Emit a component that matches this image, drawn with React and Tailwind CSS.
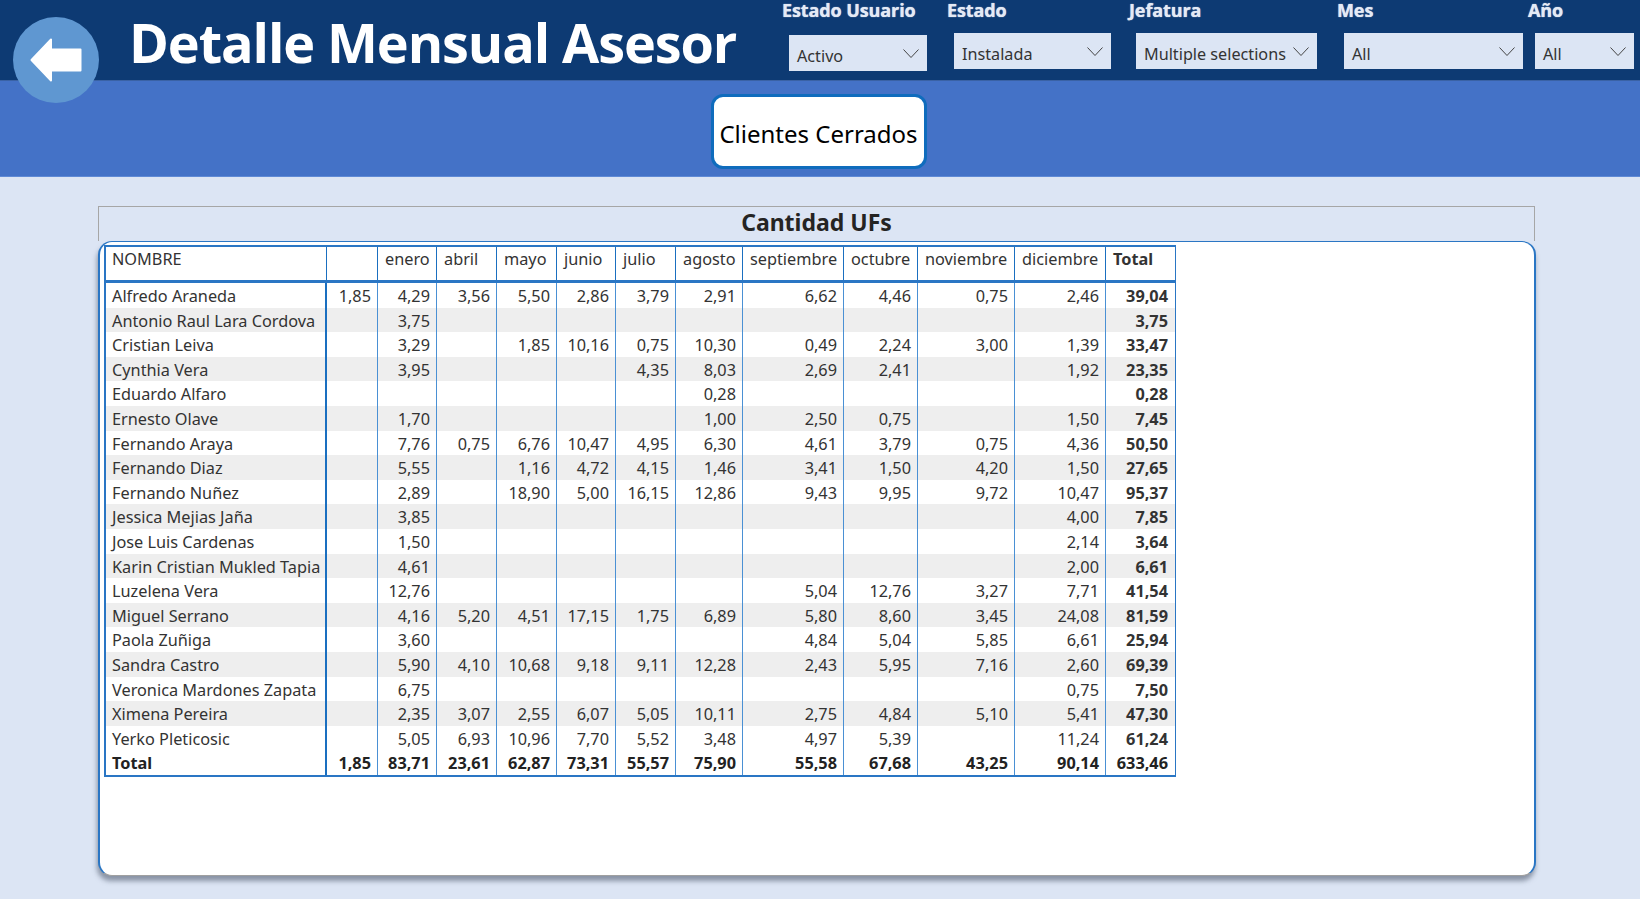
// App.jsx
import React from "react";

const MONTHS = ["", "enero", "abril", "mayo", "junio", "julio", "agosto", "septiembre", "octubre", "noviembre", "diciembre"];

// name, then blank col + 10 months + total
const ROWS = [
  ["Alfredo Araneda", "1,85", "4,29", "3,56", "5,50", "2,86", "3,79", "2,91", "6,62", "4,46", "0,75", "2,46", "39,04"],
  ["Antonio Raul Lara Cordova", "", "3,75", "", "", "", "", "", "", "", "", "", "3,75"],
  ["Cristian Leiva", "", "3,29", "", "1,85", "10,16", "0,75", "10,30", "0,49", "2,24", "3,00", "1,39", "33,47"],
  ["Cynthia Vera", "", "3,95", "", "", "", "4,35", "8,03", "2,69", "2,41", "", "1,92", "23,35"],
  ["Eduardo Alfaro", "", "", "", "", "", "", "0,28", "", "", "", "", "0,28"],
  ["Ernesto Olave", "", "1,70", "", "", "", "", "1,00", "2,50", "0,75", "", "1,50", "7,45"],
  ["Fernando Araya", "", "7,76", "0,75", "6,76", "10,47", "4,95", "6,30", "4,61", "3,79", "0,75", "4,36", "50,50"],
  ["Fernando Diaz", "", "5,55", "", "1,16", "4,72", "4,15", "1,46", "3,41", "1,50", "4,20", "1,50", "27,65"],
  ["Fernando Nuñez", "", "2,89", "", "18,90", "5,00", "16,15", "12,86", "9,43", "9,95", "9,72", "10,47", "95,37"],
  ["Jessica Mejias Jaña", "", "3,85", "", "", "", "", "", "", "", "", "4,00", "7,85"],
  ["Jose Luis Cardenas", "", "1,50", "", "", "", "", "", "", "", "", "2,14", "3,64"],
  ["Karin Cristian Mukled Tapia", "", "4,61", "", "", "", "", "", "", "", "", "2,00", "6,61"],
  ["Luzelena Vera", "", "12,76", "", "", "", "", "", "5,04", "12,76", "3,27", "7,71", "41,54"],
  ["Miguel Serrano", "", "4,16", "5,20", "4,51", "17,15", "1,75", "6,89", "5,80", "8,60", "3,45", "24,08", "81,59"],
  ["Paola Zuñiga", "", "3,60", "", "", "", "", "", "4,84", "5,04", "5,85", "6,61", "25,94"],
  ["Sandra Castro", "", "5,90", "4,10", "10,68", "9,18", "9,11", "12,28", "2,43", "5,95", "7,16", "2,60", "69,39"],
  ["Veronica Mardones Zapata", "", "6,75", "", "", "", "", "", "", "", "", "0,75", "7,50"],
  ["Ximena Pereira", "", "2,35", "3,07", "2,55", "6,07", "5,05", "10,11", "2,75", "4,84", "5,10", "5,41", "47,30"],
  ["Yerko Pleticosic", "", "5,05", "6,93", "10,96", "7,70", "5,52", "3,48", "4,97", "5,39", "", "11,24", "61,24"],
];

const TOTALS = ["Total", "1,85", "83,71", "23,61", "62,87", "73,31", "55,57", "75,90", "55,58", "67,68", "43,25", "90,14", "633,46"];

const GRID = "grid grid-cols-[221px_51px_59px_60px_60px_59px_60px_67px_101px_74px_97px_91px_71px]";

const Chevron = () => (
  <svg width="16" height="10" viewBox="0 0 16 10" fill="none" stroke="#444" strokeWidth="1" className="mt-[1px] shrink-0">
    <path d="M0.5 0.5 L8 8.5 L15.5 0.5" />
  </svg>
);

const Filter = ({ label, value, width, top }) => (
  <div className={`flex flex-col ${width}`}>
    <span className="-ml-[7px] h-[20px] whitespace-nowrap text-[18px] leading-[20px] font-bold text-[#e4eaf5] [font-family:'Open_Sans',sans-serif] tracking-[-0.1px] [text-shadow:0_0_1px_#e4eaf5]">
      {label}
    </span>
    <div className={`${top} flex h-[36px] items-center justify-between bg-[#dce5f4] pl-[8px] pr-[8.5px] text-[16.2px] text-[#333]`}>
      <span className="whitespace-nowrap pt-[6px]">{value}</span>
      <Chevron />
    </div>
  </div>
);

const Row = ({ cells, shaded, bold }) => (
  <div className={`${GRID} h-[24.6px] grid-rows-[24.6px] text-[16.3px] leading-[24.6px] ${shaded ? "bg-[#eeeeee]" : "bg-white"} ${bold ? "font-bold text-[#222]" : "text-[#333]"}`}>
    {cells.map((c, i) => (
      <div
        key={i}
        className={`h-[24.6px] overflow-hidden whitespace-nowrap pt-[1px] ${i === 0 ? "border-r-2 border-[#1a6fc0] pl-[6px] text-left" : "border-r border-[#4a90d4] text-right"} ${i > 0 && i < cells.length - 1 ? "pr-[6px]" : ""} ${i === cells.length - 1 ? "border-r-0 pr-[9px] font-bold" : ""}`}
      >
        {c}
      </div>
    ))}
  </div>
);

export default function App() {
  return (
    <div className="relative h-[899px] w-[1640px] overflow-hidden bg-[#dce5f4] [font-family:'Noto_Sans',sans-serif]">
      {/* Top bar */}
      <header className="flex h-[81px] items-start border-b border-[#3a62a5] bg-[#0d3a73]">
        <h1 className="ml-[129px] mt-[5px] whitespace-nowrap text-[54px] leading-[75px] font-bold tracking-[-1.1px] text-white [font-family:'Open_Sans',sans-serif]">
          Detalle Mensual Asesor
        </h1>
        <div className="absolute left-[789px] top-0 flex items-start">
          <Filter label="Estado Usuario" value="Activo" width="w-[138px]" top="mt-[15px]" />
          <div className="ml-[27px]">
            <Filter label="Estado" value="Instalada" width="w-[157px]" top="mt-[13px]" />
          </div>
          <div className="ml-[25px]">
            <Filter label="Jefatura" value="Multiple selections" width="w-[181px]" top="mt-[13px]" />
          </div>
          <div className="ml-[27px]">
            <Filter label="Mes" value="All" width="w-[179px]" top="mt-[13px]" />
          </div>
          <div className="ml-[12px]">
            <Filter label="Año" value="All" width="w-[99px]" top="mt-[13px]" />
          </div>
        </div>
      </header>

      {/* Back button */}
      <div className="absolute left-[13px] top-[17px] flex h-[86px] w-[86px] items-center justify-center rounded-full bg-[#5f97d1]">
        <svg width="52" height="44" viewBox="0 0 52 44" fill="#fff" stroke="#fff" strokeWidth="2" strokeLinejoin="round">
          <path d="M1.5 22 L21 1.5 L21 11.5 L50.5 11.5 L50.5 32.5 L21 32.5 L21 42.5 Z" />
        </svg>
      </div>

      {/* Tab band */}
      <div className="flex h-[96px] items-center justify-center border-b border-[#5f8ad6] bg-[#4472c7]">
        <button className="mr-[3px] mt-[6px] h-[75px] w-[216px] rounded-[12px] border-[3px] border-[#0f6cbd] bg-white pt-[4px] text-[24px] whitespace-nowrap text-black">
          Clientes Cerrados
        </button>
      </div>

      {/* Panel */}
      <section className="relative ml-[98px] mt-[29px] w-[1438px]">
        <div className="h-[35px] w-[1437px] border-x border-t border-[#a6a6a6] text-center text-[23px] leading-[31px] font-bold text-[#252423]">
          Cantidad UFs
        </div>
        <div className="h-[635px] rounded-[14px] border-x-2 border-y border-[#2a76c4] border-b-[#a0a0a0] bg-white pl-[4px] pt-[3px] shadow-[-1px_5px_5px_rgba(70,80,100,0.55)]">
          <div className="w-[1072px] border-b-2 border-l-2 border-r border-[#2a76c4]">
            {/* Header row */}
            <div className={`${GRID} h-[38px] border-y-2 border-[#2a76c4] border-b-[3px] text-[16.3px] leading-[24px] text-[#333]`}>
              <div className="border-r border-[#1a6fc0] px-[6px]">NOMBRE</div>
              {MONTHS.map((m) => (
                <div key={m} className="border-r border-[#1a6fc0] px-[7px] whitespace-nowrap">{m}</div>
              ))}
              <div className="px-[7px] font-bold">Total</div>
            </div>
            {ROWS.map((r, i) => (
              <Row key={r[0]} cells={r} shaded={i % 2 === 1} />
            ))}
            <Row cells={TOTALS} bold />
          </div>
        </div>
      </section>
    </div>
  );
}
